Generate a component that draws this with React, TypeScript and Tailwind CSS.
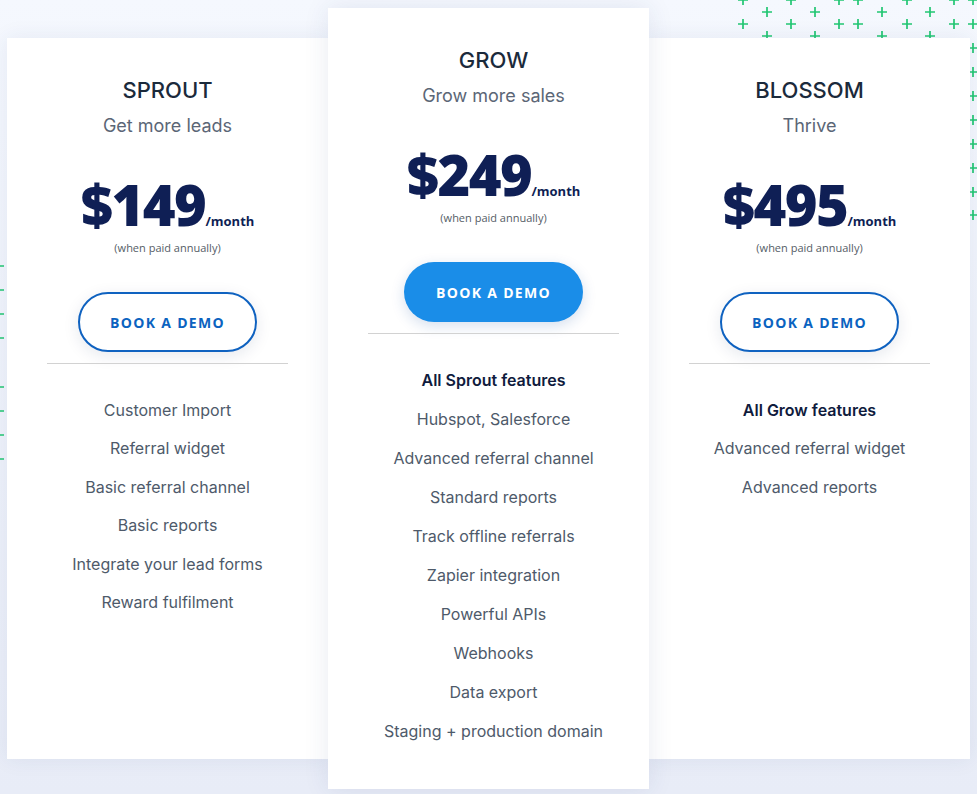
import React from "react";

const green = "#22c673";

type Plan = {
  name: string;
  tagline: string;
  price: string;
  lead?: string;
  features: string[];
  featured?: boolean;
};

const plans: Plan[] = [
  {
    name: "SPROUT",
    tagline: "Get more leads",
    price: "$149",
    features: [
      "Customer Import",
      "Referral widget",
      "Basic referral channel",
      "Basic reports",
      "Integrate your lead forms",
      "Reward fulfilment",
    ],
  },
  {
    name: "GROW",
    tagline: "Grow more sales",
    price: "$249",
    lead: "All Sprout features",
    featured: true,
    features: [
      "Hubspot, Salesforce",
      "Advanced referral channel",
      "Standard reports",
      "Track offline referrals",
      "Zapier integration",
      "Powerful APIs",
      "Webhooks",
      "Data export",
      "Staging + production domain",
    ],
  },
  {
    name: "BLOSSOM",
    tagline: "Thrive",
    price: "$495",
    lead: "All Grow features",
    features: ["Advanced referral widget", "Advanced reports"],
  },
];

// decorative plus marks (x, y centres)
const plusMarks: [number, number][] = [
  [743, 0], [743, 24], [767, 12], [767, 36], [791, 0], [791, 24], [815, 12], [815, 36], [839, 0], [839, 24],
  [858, 0], [858, 24], [882, 12], [882, 36], [907, 0], [907, 24], [930, 12], [930, 36], [954, 0], [954, 24],
  [973, 0], [973, 24], [973, 48], [973, 72], [973, 96], [973, 120], [973, 144], [973, 168], [973, 192], [973, 215],
  [-1, 266], [-1, 290], [-1, 314], [-1, 338], [-1, 387], [-1, 411], [-1, 435], [-1, 459],
];

const Pluses = () => (
  <svg className="absolute inset-0 z-0" width="977" height="794" viewBox="0 0 977 794">
    {plusMarks.map(([x, y], i) => (
      <path key={i} d={`M${x - 5} ${y}h10M${x} ${y - 5}v10`} stroke={green} strokeWidth="1.7" />
    ))}
  </svg>
);

const PlanCard = ({ plan }: { plan: Plan }) => (
  <div
    className={
      plan.featured
        ? "relative z-20 w-[321px] shrink-0 bg-white pt-[38px] pb-[38px] shadow-[0_0_24px_rgba(40,60,120,0.10)]"
        : "relative z-10 w-[321px] shrink-0 bg-white pt-[38px] my-[30px] shadow-[0_0_20px_rgba(40,60,120,0.08)]"
    }
  >
    <div className={plan.featured ? "w-[331px]" : "w-full"}>
      <div className="text-center font-['Inter',sans-serif]">
        <h3 className="text-[22px] leading-[28px] font-medium text-[#1b2a3b]">{plan.name}</h3>
        <p className="mt-2 text-[18px] leading-[28px] text-[#5b6676]">{plan.tagline}</p>
      </div>

      <div className="mt-[40px] flex items-baseline justify-center font-['Open_Sans',sans-serif] text-[#0f1f55]">
        <span className="text-[56px] leading-[48px] font-extrabold tracking-[-1.5px]">{plan.price}</span>
        <span className="text-[13px] leading-[16px] font-bold">/month</span>
      </div>
      <p className="mt-[11px] text-center font-['Open_Sans',sans-serif] text-[11px] leading-[16px] text-[#555d66]">
        (when paid annually)
      </p>

      <button
        className={
          plan.featured
            ? "mx-auto mt-[36px] flex h-[60px] w-[179px] items-center justify-center rounded-full bg-[#1a8de8] font-['Open_Sans',sans-serif] text-[14px] font-bold tracking-[1.3px] text-white shadow-[0_4px_14px_rgba(20,80,160,0.18)]"
            : "mx-auto mt-[36px] flex h-[60px] w-[179px] items-center justify-center rounded-full border-2 border-[#0f62c0] bg-white font-['Open_Sans',sans-serif] text-[14px] font-bold tracking-[1.3px] text-[#0b63c0] shadow-[0_4px_16px_rgba(20,40,90,0.10)]"
        }
      >
        BOOK A DEMO
      </button>

      <div className="mx-[40px] mt-[11px] h-px bg-[#d2d2d2]" />

      <ul
        className={
          plan.featured
            ? "mt-[27px] text-center font-['Inter',sans-serif] text-[16px] leading-[39px] text-[#4e5a6a]"
            : "mt-[27px] text-center font-['Inter',sans-serif] text-[16px] leading-[38.4px] text-[#4e5a6a]"
        }
      >
        {plan.lead && <li className="font-semibold text-[#0f1b3d]">{plan.lead}</li>}
        {plan.features.map((f) => (
          <li key={f}>{f}</li>
        ))}
      </ul>
    </div>
  </div>
);

export default function App() {
  return (
    <div className="relative h-[794px] w-full overflow-hidden bg-gradient-to-b from-[#f5f8fe] to-[#e8ecf7]">
      <Pluses />
      <div className="relative ml-[7px] flex items-stretch pt-[8px]">
        {plans.map((p) => (
          <PlanCard key={p.name} plan={p} />
        ))}
      </div>
    </div>
  );
}
